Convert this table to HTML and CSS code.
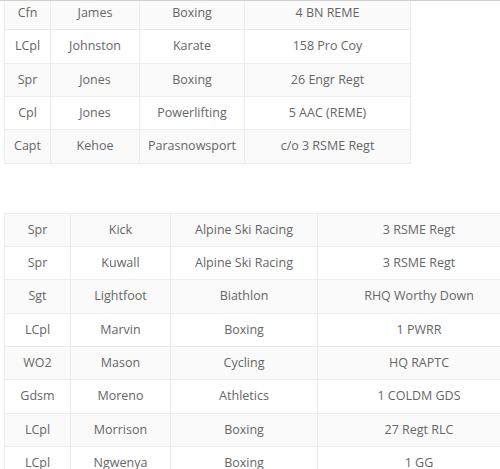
FILE: index.html
```html
<!DOCTYPE html>
<html>
<head>
<meta charset="utf-8">
<link rel="stylesheet" href="styles.css">
</head>
<body>
<div class="topline"></div>
<div class="page">
  <table class="grid grid-a">
    <colgroup><col class="a1"><col class="a2"><col class="a3"><col class="a4"></colgroup>
    <tbody>
      <tr><td>Cfn</td><td>James</td><td>Boxing</td><td>4 BN REME</td></tr>
      <tr><td>LCpl</td><td>Johnston</td><td>Karate</td><td>158 Pro Coy</td></tr>
      <tr><td>Spr</td><td>Jones</td><td>Boxing</td><td>26 Engr Regt</td></tr>
      <tr><td>Cpl</td><td>Jones</td><td>Powerlifting</td><td>5 AAC (REME)</td></tr>
      <tr><td>Capt</td><td>Kehoe</td><td>Parasnowsport</td><td>c/o 3 RSME Regt</td></tr>
    </tbody>
  </table>

  <table class="grid grid-b">
    <colgroup><col class="b1"><col class="b2"><col class="b3"><col class="b4"></colgroup>
    <tbody>
      <tr><td>Spr</td><td>Kick</td><td>Alpine Ski Racing</td><td>3 RSME Regt</td></tr>
      <tr><td>Spr</td><td>Kuwall</td><td>Alpine Ski Racing</td><td>3 RSME Regt</td></tr>
      <tr><td>Sgt</td><td>Lightfoot</td><td>Biathlon</td><td>RHQ Worthy Down</td></tr>
      <tr><td>LCpl</td><td>Marvin</td><td>Boxing</td><td>1 PWRR</td></tr>
      <tr><td>WO2</td><td>Mason</td><td>Cycling</td><td>HQ RAPTC</td></tr>
      <tr><td>Gdsm</td><td>Moreno</td><td>Athletics</td><td>1 COLDM GDS</td></tr>
      <tr><td>LCpl</td><td>Morrison</td><td>Boxing</td><td>27 Regt RLC</td></tr>
      <tr><td>LCpl</td><td>Ngwenya</td><td>Boxing</td><td>1 GG</td></tr>
    </tbody>
  </table>
</div>
</body>
</html>
```

FILE: styles.css
```css
html, body {
  margin: 0;
  padding: 0;
  background: #ffffff;
  overflow: hidden;
}

body {
  font-family: "Open Sans", "DejaVu Sans", sans-serif;
  font-size: 12.5px;
  color: #666666;
}

.topline {
  position: fixed;
  top: 0;
  left: 0;
  right: 0;
  height: 1px;
  background: #cfcfcf;
}

.page {
  margin-top: -4px;
  padding-left: 4px;
}

.grid {
  border-collapse: collapse;
  table-layout: fixed;
}

.grid td {
  border: 1px solid #ececec;
  padding: 8px 4px;
  line-height: 16.33px;
  text-align: center;
  white-space: nowrap;
}

.grid tr:nth-child(odd) td {
  background: #fafafa;
}

.grid-a { width: 406px; }
.a1 { width: 46px; }
.a2 { width: 89px; }
.a3 { width: 105px; }
.a4 { width: 166px; }

.grid-b {
  width: 516px;
  margin-top: 49px;
}
.b1 { width: 66px; }
.b2 { width: 100px; }
.b3 { width: 147px; }
.b4 { width: 203px; }
```
